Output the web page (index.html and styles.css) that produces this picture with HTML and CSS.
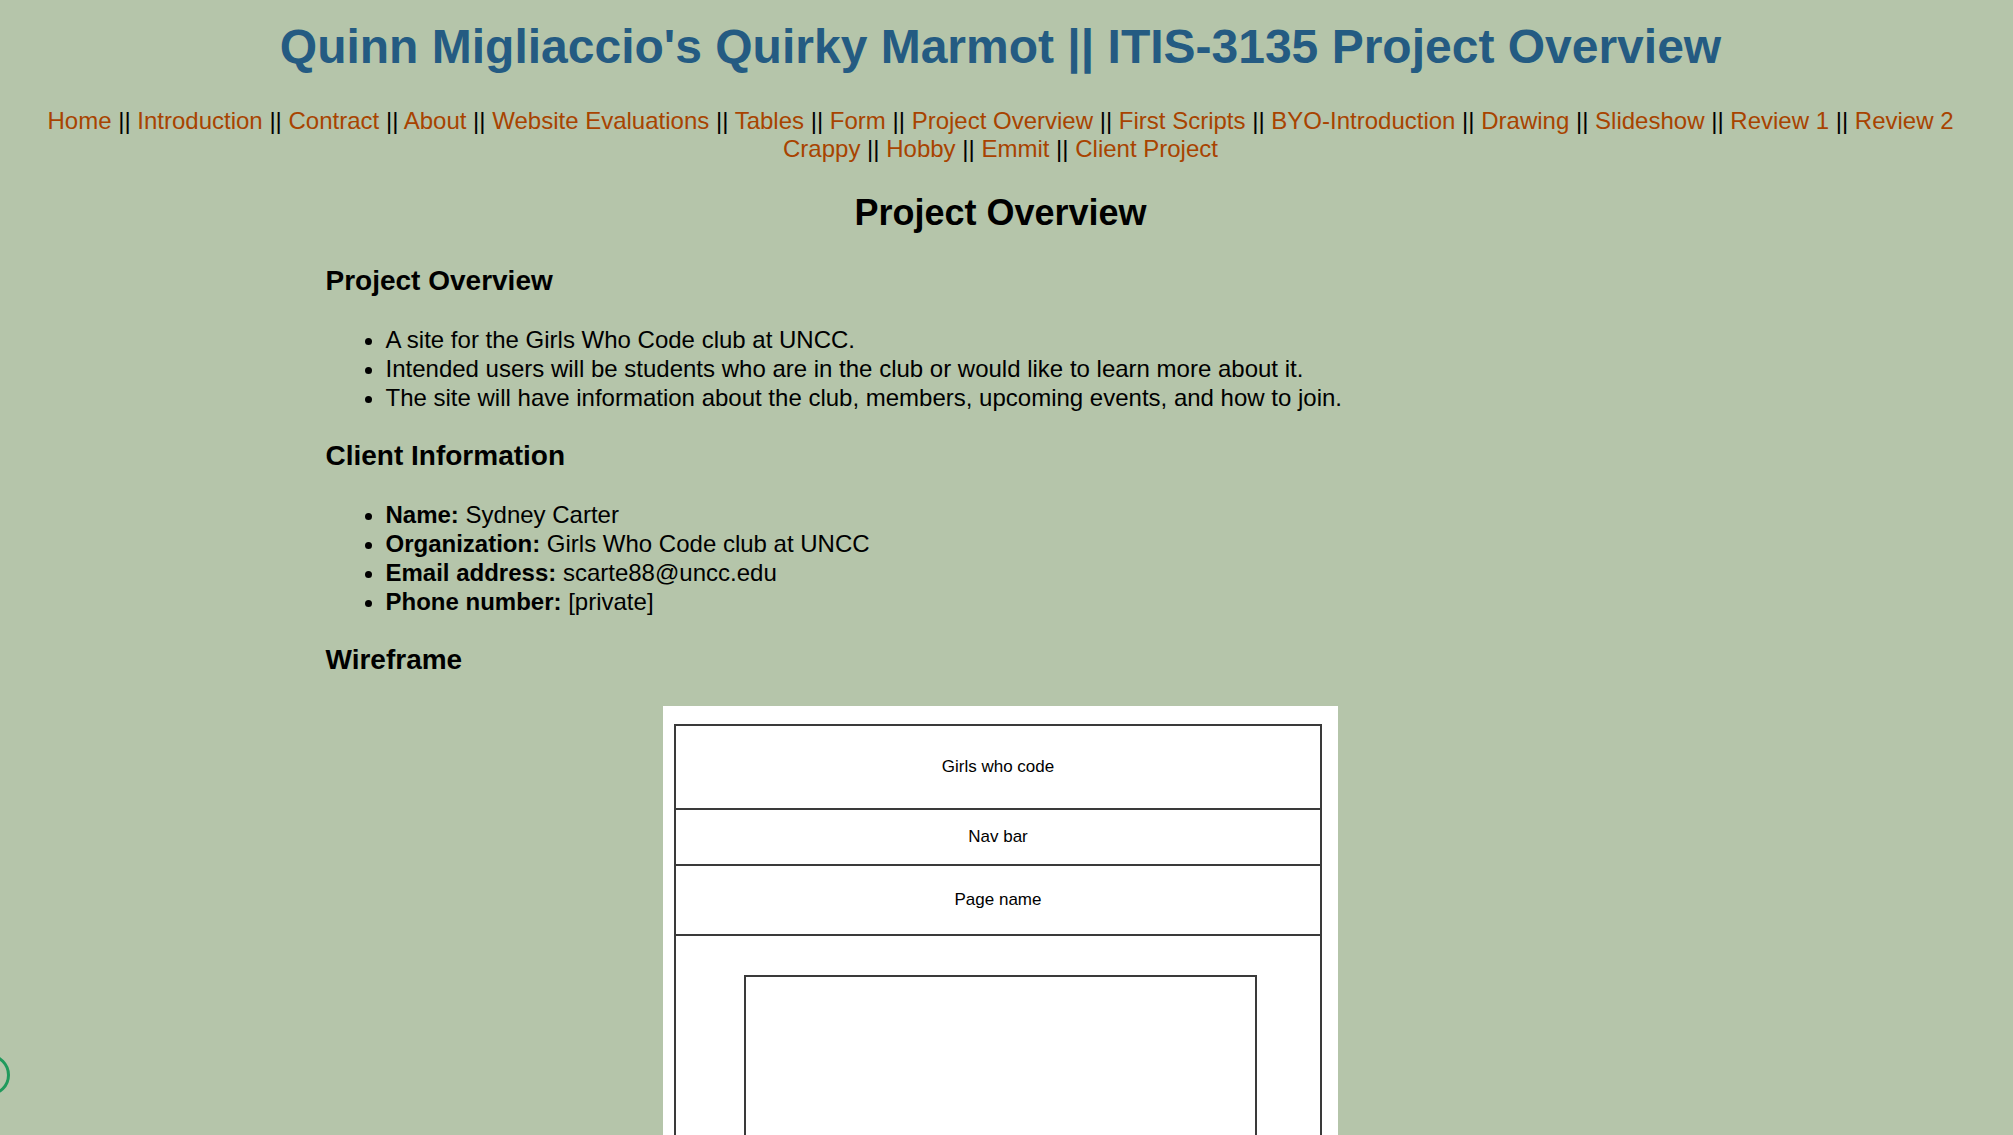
FILE: index.html
```
<!DOCTYPE html>
<html lang="en">
<head>
<meta charset="utf-8">
<title>Quinn Migliaccio's Quirky Marmot || ITIS-3135 Project Overview</title>
<link rel="stylesheet" href="styles.css">
</head>
<body>
<header>
<h1>Quinn Migliaccio's Quirky Marmot || ITIS-3135 Project Overview</h1>
<nav>
<a href="#">Home</a> ||
<a href="#">Introduction</a> ||
<a href="#">Contract</a> ||
<a href="#">About</a> ||
<a href="#">Website Evaluations</a> ||
<a href="#">Tables</a> ||
<a href="#">Form</a> ||
<a href="#">Project Overview</a> ||
<a href="#">First Scripts</a> ||
<a href="#">BYO-Introduction</a> ||
<a href="#">Drawing</a> ||
<a href="#">Slideshow</a> ||
<a href="#">Review 1</a> ||
<a href="#">Review 2</a>
<br>
<a href="#">Crappy</a> ||
<a href="#">Hobby</a> ||
<a href="#">Emmit</a> ||
<a href="#">Client Project</a>
</nav>
</header>
<main>
<h2>Project Overview</h2>
<section>
<h3>Project Overview</h3>
<ul>
<li>A site for the Girls Who Code club at UNCC.</li>
<li>Intended users will be students who are in the club or would like to learn more about it.</li>
<li>The site will have information about the club, members, upcoming events, and how to join.</li>
</ul>
</section>
<section>
<h3>Client Information</h3>
<ul>
<li><strong>Name:</strong> Sydney Carter</li>
<li><strong>Organization:</strong> Girls Who Code club at UNCC</li>
<li><strong>Email address:</strong> scarte88@uncc.edu</li>
<li><strong>Phone number:</strong> [private]</li>
</ul>
</section>
<section>
<h3>Wireframe</h3>
<figure class="wireframe">
<div class="frame">
<div class="row row-title">Girls who code</div>
<div class="row row-nav">Nav bar</div>
<div class="row row-page">Page name</div>
<div class="row-content"><div class="content-box"></div></div>
</div>
</figure>
</section>
</main>
<div class="badge"></div>
</body>
</html>
```
FILE: styles.css
```
* {
  box-sizing: border-box;
}

body {
  margin: 0;
  padding: 18px 36px 0 24px;
  background: #b5c5aa;
  color: #000;
  font-family: Arial, "Liberation Sans", sans-serif;
  font-size: 24px;
  line-height: 29px;
}

h1 {
  margin: 0 0 31px;
  color: #245b82;
  font-size: 48px;
  line-height: 58px;
  text-align: center;
}

nav {
  text-align: center;
  line-height: 28px;
}

a {
  color: #a84300;
  text-decoration: none;
}

main {
  max-width: 1350px;
  margin: 0 auto;
}

h2 {
  margin: 28px 0 30px;
  font-size: 36px;
  line-height: 44px;
  text-align: center;
}

h3 {
  margin: 28px 0;
  font-size: 28px;
  line-height: 32px;
}

ul {
  margin: 28px 0;
  padding-left: 60px;
}

.wireframe {
  width: 50%;
  margin: 30px auto 0;
  padding: 18px 16px 0 11px;
  background: #fff;
  font-size: 17px;
}

.frame {
  border: 2px solid #3a3a3a;
  border-bottom: 0;
}

.row {
  display: flex;
  align-items: center;
  justify-content: center;
  padding-bottom: 2px;
  border-bottom: 2px solid #3a3a3a;
}

.row-title {
  height: 84px;
}

.row-nav {
  height: 56px;
}

.row-page {
  height: 70px;
}

.row-content {
  padding: 39px 63px 0 68px;
}

.content-box {
  height: 400px;
  border: 2px solid #3a3a3a;
}

.badge {
  position: fixed;
  left: -32px;
  bottom: 39px;
  width: 42px;
  height: 42px;
  border: 3px solid #1f9a5c;
  border-radius: 50%;
}
```
